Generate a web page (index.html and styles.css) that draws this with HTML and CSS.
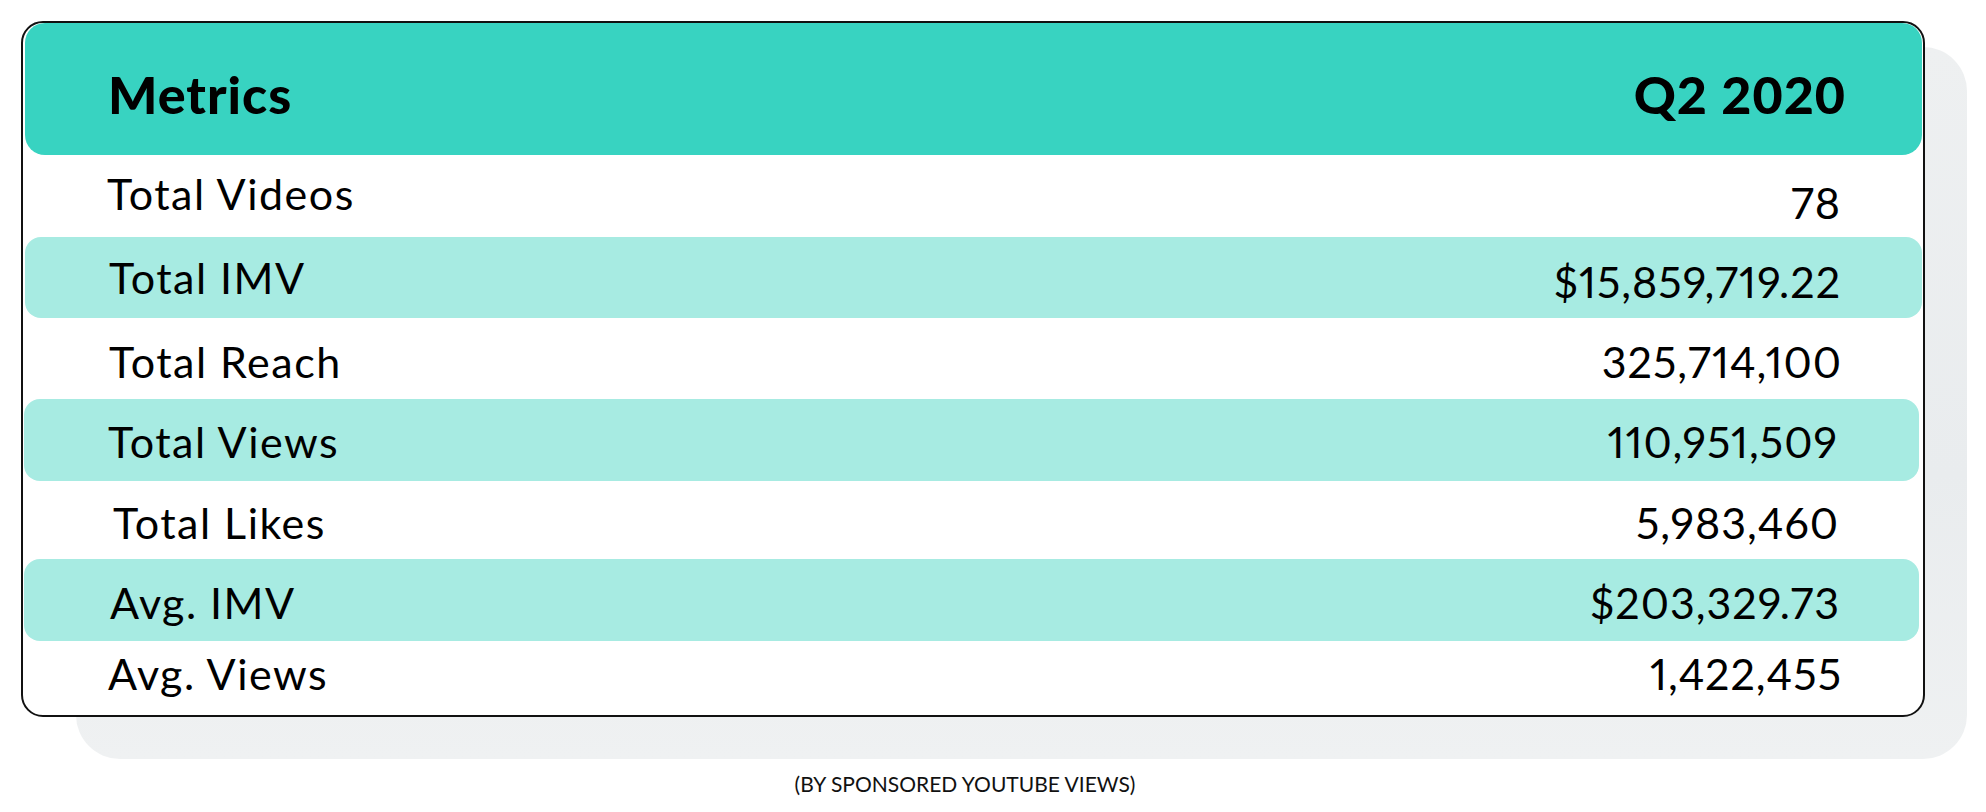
FILE: index.html
```html
<!DOCTYPE html>
<html lang="en">
<head>
<meta charset="utf-8">
<title>Metrics Q2 2020</title>
<link rel="stylesheet" href="styles.css">
</head>
<body>
<div class="page">
  <div class="stage">
    <div class="card">
      <div class="head">
        <span class="head-label">Metrics</span>
        <span class="head-value">Q2 2020</span>
      </div>
      <div class="row r1"><span class="label">Total Videos</span><span class="value">78</span></div>
      <div class="row r2 alt"><span class="label">Total IMV</span><span class="value">$15,859,719.22</span></div>
      <div class="row r3"><span class="label">Total Reach</span><span class="value">325,714,100</span></div>
      <div class="row r4 alt"><span class="label">Total Views</span><span class="value">110,951,509</span></div>
      <div class="row r5"><span class="label">Total Likes</span><span class="value">5,983,460</span></div>
      <div class="row r6 alt"><span class="label">Avg. IMV</span><span class="value">$203,329.73</span></div>
      <div class="row r7"><span class="label">Avg. Views</span><span class="value">1,422,455</span></div>
    </div>
  </div>
  <p class="caption">(BY SPONSORED YOUTUBE VIEWS)</p>
</div>
</body>
</html>
```
FILE: styles.css
```css
* { box-sizing: border-box; }
html, body { margin: 0; padding: 0; background: #ffffff; }
body { font-family: "Lato", "Noto Sans", sans-serif; color: #000; }

.page { width: 1986px; height: 812px; overflow: hidden; }

.stage {
  position: relative;
  padding: 21px 0 0 21px;
}
.stage::before {
  content: "";
  position: absolute;
  left: 76px;
  top: 47px;
  width: 1891px;
  height: 712px;
  border-radius: 44px;
  background: linear-gradient(180deg, #eef0f1 0%, #e9ecee 60%, #eff1f2 100%);
}

.card {
  position: relative;
  width: 1904px;
  height: 696px;
  border: 2px solid #111;
  border-radius: 22px;
  background: #fff;
  padding: 0 1px;
  display: flex;
  flex-direction: column;
}

.head {
  height: 132px;
  background: #38d3c1;
  border-radius: 20px;
  margin: 0 0 0 1px;
  display: flex;
  justify-content: space-between;
  align-items: center;
  padding: 10px 76px 0 83px;
  font-weight: 900;
  font-size: 52px;
  line-height: 1;
  letter-spacing: 1px;
}

.row {
  display: flex;
  justify-content: space-between;
  align-items: center;
  padding: 0 81px 0 84px;
  font-size: 43px;
  line-height: 1;
}
.label { letter-spacing: 1.5px; }
.value { font-feature-settings: "pnum" 1; font-variant-numeric: proportional-nums; letter-spacing: 1px; }
.alt { background: #a7ebe2; border-radius: 16px; }

.r1 { height: 82px; padding-left: 83px; }
.r1 .label { margin-top: -6px; }
.r1 .value { margin-top: 12px; }
.r2 { height: 81px; margin-left: 1px; padding-left: 84px; }
.r2 .value { margin-top: 8px; }
.r3 { height: 81px; padding-left: 85px; padding-right: 80px; }
.r3 .label, .r3 .value { margin-top: 6px; }
.r4 { height: 82px; margin-right: 3px; padding-right: 81px; }
.r4 .label, .r4 .value { margin-top: 2px; }
.r5 { height: 78px; padding-left: 89px; padding-right: 83px; }
.r5 .label, .r5 .value { margin-top: 4px; }
.r6 { height: 82px; margin-right: 3px; padding-left: 86px; padding-right: 79px; }
.r6 .label, .r6 .value { margin-top: 4px; }
.r7 { height: 74px; padding-left: 84px; padding-right: 80px; }
.r7 .label, .r7 .value { margin-top: -10px; }

.caption {
  margin: 56px 0 0 21px;
  width: 1888px;
  text-align: center;
  font-size: 21px;
  line-height: 22px;
  color: #111;
}
```
